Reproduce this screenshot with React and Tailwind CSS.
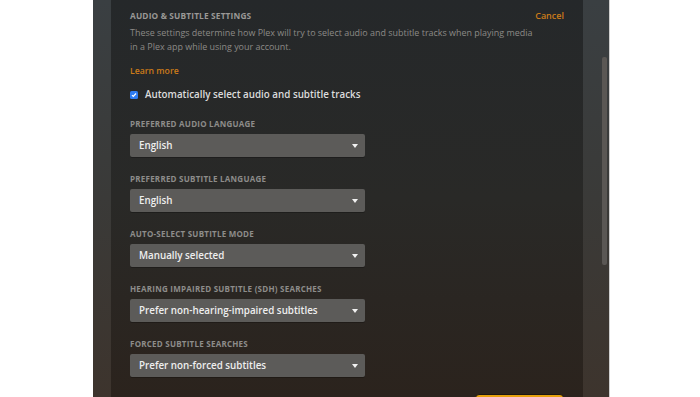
import React from "react";

function Select({ value }) {
  return (
    <div className="mt-[5px] flex h-[23px] w-[235px] items-center justify-between rounded-[2px] bg-[#5c5b59] pl-[9px] pr-[7px] shadow-[0_1px_0_rgba(0,0,0,0.25)]">
      <span className="pt-[2px] text-[9.8px] font-semibold text-[#eeeeee]">{value}</span>
      <svg width="6" height="4" viewBox="0 0 6 4">
        <path d="M0 0h6L3 4z" fill="#f2f2f2" />
      </svg>
    </div>
  );
}

function Field({ label, value }) {
  return (
    <div className="mt-[15px]">
      <div className="h-[12px] pt-[1px] text-[8px] font-bold uppercase leading-[12px] tracking-[0.03em] text-[#8d8c8a]">
        {label}
      </div>
      <Select value={value} />
    </div>
  );
}

export default function App() {
  return (
    <div
      className="flex h-[397px] w-[700px] overflow-hidden bg-white"
      style={{ fontFamily: '"Open Sans", "Liberation Sans", sans-serif' }}
    >
      <div className="w-[93px] shrink-0 bg-white" />
      <div className="flex w-[516px] shrink-0 bg-gradient-to-b from-[#3a3f42] via-[#3a3a38] to-[#3d342d]">
        <div className="w-[18px] shrink-0" />
        <div className="flex w-[472px] shrink-0 flex-col bg-gradient-to-b from-[#25282a] via-[#292927] to-[#2b231d] pl-[19px] pr-[19px]">
          <div className="mt-[10px] flex h-[12px] items-center justify-between">
            <span className="text-[8.3px] font-bold uppercase tracking-[0.02em] text-[#9a9896]">
              Audio &amp; Subtitle Settings
            </span>
            <span className="text-[9px] font-semibold text-[#cc7b19]">Cancel</span>
          </div>
          <p className="mt-[4px] w-[405px] text-[8.95px] leading-[14px] text-[#8c8a87]">
            These settings determine how Plex will try to select audio and subtitle tracks when playing media
            in a Plex app while using your account.
          </p>
          <div className="mt-[10px] h-[14px] text-[8.7px] font-semibold leading-[14px] text-[#cc7b19]">
            Learn more
          </div>
          <div className="mt-[10px] flex h-[14px] items-center">
            <div className="flex h-[8px] w-[8px] items-center justify-center rounded-[1.5px] bg-[#2f7cf0]">
              <svg width="6" height="6" viewBox="0 0 6 6">
                <path d="M1 3.2l1.3 1.3L5 1.5" stroke="#fff" strokeWidth="1.2" fill="none" />
              </svg>
            </div>
            <span className="ml-[7px] pt-[1px] text-[9.8px] font-semibold text-[#dcdcdc]">
              Automatically select audio and subtitle tracks
            </span>
          </div>
          <Field label="Preferred Audio Language" value="English" />
          <Field label="Preferred Subtitle Language" value="English" />
          <Field label="Auto-Select Subtitle Mode" value="Manually selected" />
          <Field label="Hearing Impaired Subtitle (SDH) Searches" value="Prefer non-hearing-impaired subtitles" />
          <Field label="Forced Subtitle Searches" value="Prefer non-forced subtitles" />
          <div className="mt-[17px] flex shrink-0 justify-end">
            <div className="h-[28px] w-[89px] shrink-0 rounded-[4px] border border-[#1a1612] bg-[#e5a00d]" />
          </div>
        </div>
        <div className="w-[26px] shrink-0 pl-[19px] pt-[57px]">
          <div className="h-[208px] w-[5px] rounded-[2px] bg-[#5a5754]" />
        </div>
      </div>
      <div className="flex-1 border-l border-[#cfcfcf] bg-white" />
    </div>
  );
}
